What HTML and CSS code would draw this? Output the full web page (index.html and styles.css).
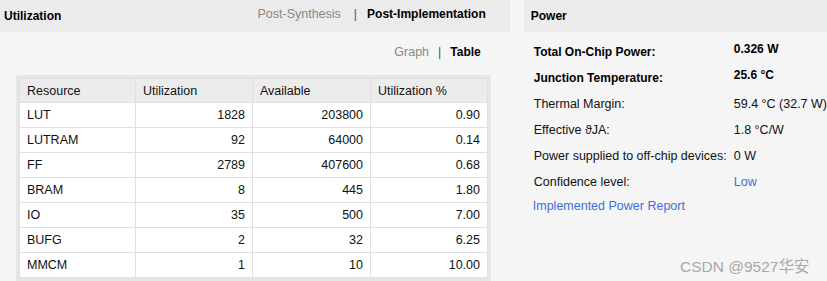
FILE: index.html
```html
<!DOCTYPE html>
<html lang="en">
<head>
    <meta charset="UTF-8">
    <title>Utilization / Power</title>
    <link rel="stylesheet" href="styles.css">
</head>
<body>
    <div class="page">
        <div class="util">
            <div class="panelHead">
                <span class="title">Utilization</span>
                <span class="tabs">
                    <a href="javascript:;" class="off">Post-Synthesis</a>
                    <i>|</i>
                    <a href="javascript:;" class="on">Post-Implementation</a>
                </span>
            </div>
            <div class="viewSwitch">
                <a href="javascript:;" class="off">Graph</a>
                <i>|</i>
                <a href="javascript:;" class="on">Table</a>
            </div>
            <div class="frame">
                <table class="grid">
                    <thead>
                        <tr><th>Resource</th><th>Utilization</th><th>Available</th><th>Utilization %</th></tr>
                    </thead>
                    <tbody>
                        <tr><td>LUT</td><td>1828</td><td>203800</td><td>0.90</td></tr>
                        <tr><td>LUTRAM</td><td>92</td><td>64000</td><td>0.14</td></tr>
                        <tr><td>FF</td><td>2789</td><td>407600</td><td>0.68</td></tr>
                        <tr><td>BRAM</td><td>8</td><td>445</td><td>1.80</td></tr>
                        <tr><td>IO</td><td>35</td><td>500</td><td>7.00</td></tr>
                        <tr><td>BUFG</td><td>2</td><td>32</td><td>6.25</td></tr>
                        <tr><td>MMCM</td><td>1</td><td>10</td><td>10.00</td></tr>
                    </tbody>
                </table>
            </div>
        </div>
        <div class="power">
            <div class="panelHead">
                <span class="title">Power</span>
            </div>
            <ul class="powerList">
                <li class="strong"><span>Total On-Chip Power:</span><span class="hi">0.326 W</span></li>
                <li class="strong"><span>Junction Temperature:</span><span class="hi">25.6 °C</span></li>
                <li><span>Thermal Margin:</span><span>59.4 °C (32.7 W)</span></li>
                <li><span>Effective ϑJA:</span><span>1.8 °C/W</span></li>
                <li><span>Power supplied to off-chip devices:</span><span>0 W</span></li>
                <li><span>Confidence level:</span><a href="javascript:;">Low</a></li>
                <li class="report"><a href="javascript:;">Implemented Power Report</a></li>
            </ul>
        </div>
    </div>
    <div class="mark">CSDN @9527华安</div>
</body>
</html>
```

FILE: styles.css
```css
*{
    margin: 0;
    padding: 0;
}
ul,ol{
    list-style: none;
}
a{
    text-decoration: none;
}
i{
    font-style: normal;
}
body{
    background: #f5f5f5;
    font: 12.5px "Liberation Sans", Arial, "Noto Sans CJK SC", sans-serif;
    color: #111;
}
.page{
    display: flex;
    gap: 14px;
}
.util{
    width: 510px;
}
.power{
    flex: 1;
}
.panelHead{
    height: 32px;
    background: #ebebeb;
    display: flex;
    align-items: center;
    justify-content: space-between;
    padding: 0 24px 0 4px;
}
.panelHead .title{
    font-weight: bold;
    font-size: 12px;
    color: #000;
}
.power .panelHead{
    padding-left: 7px;
}
.tabs{
    display: flex;
    align-items: baseline;
    gap: 10px;
    margin-top: -4px;
}
.tabs i,.viewSwitch i{
    color: #555;
}
.off{
    color: #888;
}
.on{
    color: #000;
    font-weight: bold;
    font-size: 12px;
}
.tabs .off{
    margin-right: 3px;
}
.viewSwitch{
    display: flex;
    align-items: baseline;
    justify-content: flex-end;
    gap: 9px;
    padding: 12px 29px 0 0;
    line-height: 16px;
}
.frame{
    margin: 15px 0 0 16px;
    width: 469px;
    padding: 3px;
    background: #e6e6e6;
}
.grid{
    width: 469px;
    border-collapse: collapse;
    table-layout: fixed;
}
.grid th,.grid td{
    border: 1px solid #e0e0e0;
    height: 24px;
    padding: 0 7px;
    text-align: right;
    white-space: nowrap;
}
.grid th{
    background: #ececec;
    font-weight: normal;
    text-align: left;
    height: 23px;
}
.grid td{
    background: #fff;
}
.grid td:first-child{
    text-align: left;
}
.grid th:first-child,.grid td:first-child{
    width: 101px;
}
.grid th:nth-child(2){
    width: 102px;
}
.grid th:nth-child(3){
    width: 103px;
}
.powerList{
    padding: 7px 0 0 10px;
}
.powerList li{
    display: flex;
    line-height: 26px;
    white-space: nowrap;
}
.powerList li span:first-child{
    width: 200px;
    flex-shrink: 0;
}
.powerList .strong{
    font-weight: bold;
    font-size: 12px;
    color: #000;
}
.powerList .hi{
    margin-top: -3px;
}
.powerList a{
    color: #3c6fdc;
}
.powerList .report{
    margin-left: -1px;
    line-height: 22px;
}
.mark{
    position: absolute;
    left: 680px;
    top: 254px;
    font-size: 15.5px;
    color: #a8a8a8;
}
```
